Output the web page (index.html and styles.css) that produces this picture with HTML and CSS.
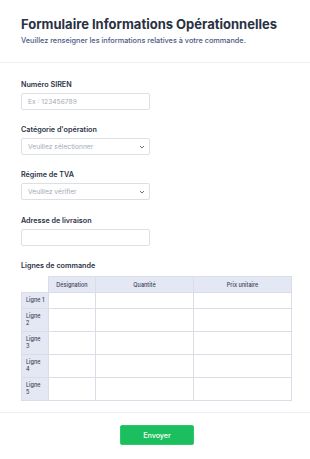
FILE: index.html
```html
<!DOCTYPE html>
<html lang="fr">
<head>
<meta charset="utf-8">
<link rel="stylesheet" href="styles.css">
</head>
<body>
<div class="page">
  <header class="head">
    <h1 class="title">Formulaire Informations Opérationnelles</h1>
    <p class="subtitle">Veuillez renseigner les informations relatives à votre commande.</p>
  </header>
  <form class="form">
    <div class="field">
      <label class="label">Numéro SIREN</label>
      <div class="input"><span class="ph">Ex : 123456789</span></div>
    </div>
    <div class="field">
      <label class="label">Catégorie d'opération</label>
      <div class="input select"><span class="ph">Veuillez sélectionner</span>
        <svg class="chev" width="6" height="4" viewBox="0 0 6 4"><path d="M1 1l2 2 2-2" fill="none" stroke="#6b7386" stroke-width="1"/></svg>
      </div>
    </div>
    <div class="field">
      <label class="label">Régime de TVA</label>
      <div class="input select"><span class="ph">Veuillez vérifier</span>
        <svg class="chev" width="6" height="4" viewBox="0 0 6 4"><path d="M1 1l2 2 2-2" fill="none" stroke="#6b7386" stroke-width="1"/></svg>
      </div>
    </div>
    <div class="field">
      <label class="label">Adresse de livraison</label>
      <div class="input"></div>
    </div>
    <div class="field table-field">
      <label class="label">Lignes de commande</label>
      <table class="grid">
        <thead>
          <tr><th class="corner"></th><th class="c1">Désignation</th><th class="c2">Quantité</th><th class="c3">Prix unitaire</th></tr>
        </thead>
        <tbody>
          <tr class="r1"><th>Ligne 1</th><td></td><td></td><td></td></tr>
          <tr><th>Ligne<br>2</th><td></td><td></td><td></td></tr>
          <tr><th>Ligne<br>3</th><td></td><td></td><td></td></tr>
          <tr><th>Ligne<br>4</th><td></td><td></td><td></td></tr>
          <tr><th>Ligne<br>5</th><td></td><td></td><td></td></tr>
        </tbody>
      </table>
    </div>
  </form>
  <footer class="foot">
    <button class="send" type="button">Envoyer</button>
  </footer>
</div>
</body>
</html>
```
FILE: styles.css
```css
* { box-sizing: border-box; }
html, body { margin: 0; padding: 0; background: #fff; }
body { font-family: Inter, "Noto Sans", sans-serif; color: #2b3346; }
.page { width: 310px; }
.head { padding: 16px 21px 16px; border-bottom: 1px solid #eceef1; }
.title { margin: 0; font-size: 13px; font-weight: 700; line-height: 17px; color: #2a3142; letter-spacing: 0; }
.subtitle { margin: 3px 0 0; font-size: 7.3px; line-height: 10px; color: #4c5b85; font-weight: 500; }
.form { padding: 17px 21px 11px; display: flex; flex-direction: column; gap: 15px; border-bottom: 1px solid #eceef1; }
.field { display: flex; flex-direction: column; gap: 4px; }
.field:nth-child(4) { margin-top: 1px; }
.label { font-size: 7.2px; font-weight: 600; line-height: 9px; color: #2b3346; }
.input { width: 129px; height: 17px; border: 1px solid #dcdfe6; border-radius: 2px; display: flex; align-items: center; padding: 0 6px; justify-content: space-between; }
.ph { font-size: 6.7px; color: #a3a9b6; }
.chev { flex: none; margin-right: -2px; }
.table-field { gap: 6px; }
.grid { border-collapse: collapse; width: 271px; table-layout: fixed; font-size: 5.5px; color: #3b4254; }
.grid th, .grid td { border: 1px solid #dadde6; padding: 0; }
.grid thead th { background: #e3e8f4; height: 16px; font-weight: 500; text-align: center; }
.grid thead th.corner { background: #fff; border: none; border-bottom: 1px solid #dadde6; width: 27px; }
.grid .c1 { width: 47px; }
.grid .c2 { width: 98px; }
.grid tbody th { background: #e3e8f4; font-weight: 500; text-align: left; padding: 0 1px 0 4px; height: 23px; line-height: 7px; white-space: nowrap; }
.grid tbody tr.r1 th, .grid tbody tr.r1 td { height: 16px; }
.foot { display: flex; justify-content: center; padding: 12px 0 16px 4px; }
.send { width: 74px; height: 20px; background: #1cbf5d; border: 1px solid #2ec76b; border-radius: 2px; color: #fff; font-family: Inter, sans-serif; font-size: 7.2px; font-weight: 500; padding: 0; }
```
